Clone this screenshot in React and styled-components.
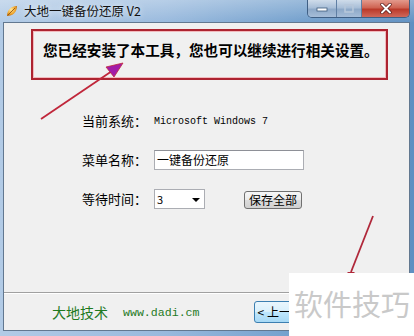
import React from "react";
import styled, { createGlobalStyle } from "styled-components";

const Global = createGlobalStyle`
  html, body { margin: 0; padding: 0; background: #ffffff; }
  body { font-family: "Noto Sans CJK SC", "Noto Sans", sans-serif; }
`;

const Window = styled.div`
  position: relative;
  width: 414px;
  height: 336px;
  display: flex;
  flex-direction: column;
  background: linear-gradient(to right, #b2cbe6 0%, #98b9dd 40%, #6f9dcb 75%, #5f90c2 100%);
  overflow: hidden;
`;

const TitleBar = styled.div`
  height: 22px;
  display: flex;
  align-items: flex-start;
  padding-left: 5px;
  background: linear-gradient(to bottom, rgba(255,255,255,0.3), rgba(255,255,255,0.02));
`;

const AppIcon = styled.svg`
  width: 14px;
  height: 14px;
  margin-top: 4px;
  flex: none;
`;

const Title = styled.div`
  margin-left: 5px;
  margin-top: 2px;
  font-size: 12.5px;
  line-height: 18px;
  color: #111;
  text-shadow: 0 0 6px rgba(255,255,255,0.9);
  white-space: nowrap;
  flex: 1;
`;

const Caption = styled.div`
  display: flex;
  margin-right: 4px;
  height: 17px;
  border: 1px solid #3f5f84;
  border-top: none;
  border-radius: 0 0 5px 5px;
  overflow: hidden;
`;

const CapBtn = styled.div`
  width: ${p => p.$w}px;
  height: 17px;
  display: flex;
  align-items: center;
  justify-content: center;
  border-left: ${p => (p.$first ? "none" : "1px solid #5f7fa4")};
  background: ${p =>
    p.$close
      ? "linear-gradient(to bottom, #e39a8c 0%, #cf6453 45%, #bb3a2a 55%, #d0685a 100%)"
      : "linear-gradient(to bottom, #cfdcea 0%, #a9bfd8 45%, #8ea9c8 55%, #a6bdd8 100%)"};
`;

const Client = styled.div`
  flex: 1;
  margin: 0 4px 5px 3px;
  border: 1px solid #627890;
  background: #f0f0f0;
  display: flex;
  flex-direction: column;
`;

const Banner = styled.div`
  margin: 6px 21px 0 27px;
  border: 2px solid #ad2330;
  box-shadow: inset 0 0 0 1px #f2b9bd;
  padding: 8px 0 0 10px;
  height: 39px;
`;

const BannerText = styled.div`
  font-size: 14.6px;
  font-weight: 700;
  line-height: 22px;
  color: #000;
  white-space: nowrap;
`;

const Form = styled.div`
  margin: 31px 0 0 78px;
  display: grid;
  grid-template-columns: 72px 90px 58px;
  grid-auto-rows: 20px;
  row-gap: 19px;
  align-items: center;
`;

const Label = styled.div`
  font-size: 13px;
  line-height: 20px;
  color: #000;
  white-space: nowrap;
`;

const Mono = styled.div`
  grid-column: span 2;
  font-family: "Liberation Mono", "DejaVu Sans Mono", monospace;
  font-size: 10px;
  color: #000;
  white-space: nowrap;
`;

const TextBox = styled.div`
  grid-column: span 2;
  width: 146px;
  height: 18px;
  border: 1px solid #abadb3;
  border-top-color: #8e9097;
  background: #fff;
  font-size: 12px;
  line-height: 18px;
  padding-left: 2px;
  white-space: nowrap;
`;

const Select = styled.div`
  width: 43px;
  height: 18px;
  border: 1px solid #abadb3;
  background: #fff;
  display: flex;
  align-items: center;
  justify-content: space-between;
  padding: 0 4px 0 2px;
  font-size: 11px;
  line-height: 18px;
`;

const Caret = styled.span`
  width: 0;
  height: 0;
  border-left: 4px solid transparent;
  border-right: 4px solid transparent;
  border-top: 4px solid #000;
  margin-top: 2px;
`;

const Button = styled.div`
  box-sizing: border-box;
  width: ${p => p.$w}px;
  height: ${p => p.$h}px;
  border: 1px solid #707070;
  border-radius: 3px;
  background: linear-gradient(to bottom, #f6f6f6 0%, #ebebeb 48%, #dcdcdc 52%, #d0d0d0 100%);
  font-size: 12px;
  line-height: ${p => p.$h - 2}px;
  text-align: center;
  color: #000;
  white-space: nowrap;
  margin-top: ${p => p.$mt || 0}px;
`;

const Spacer = styled.div`
  flex: 1;
`;

const Separator = styled.div`
  height: 1px;
  background: #a0a0a0;
  border-bottom: 1px solid #ffffff;
`;

const Footer = styled.div`
  height: 36px;
  display: flex;
  align-items: center;
  padding-left: 48px;
`;

const Brand = styled.span`
  font-size: 14px;
  color: #1f7a1f;
  white-space: nowrap;
`;

const Site = styled.span`
  margin-left: 15px;
  font-family: "Liberation Mono", "DejaVu Sans Mono", monospace;
  font-size: 11.6px;
  color: #1f7a1f;
  white-space: nowrap;
`;

const BackButton = styled(Button)`
  margin-left: 54px;
  text-align: left;
  padding-left: 3px;
  border-color: #3c7fb1;
  background: linear-gradient(to bottom, #eaf6fd 0%, #d9f0fc 48%, #bee6fd 52%, #a7d9f5 100%);
`;

const Overlay = styled.svg`
  position: absolute;
  left: 0;
  top: 0;
  width: 414px;
  height: 336px;
  pointer-events: none;
`;

const Watermark = styled.div`
  position: absolute;
  left: 289px;
  top: 273px;
  width: 125px;
  height: 63px;
  background: #ffffff;
  display: flex;
  align-items: center;
  padding: 0 0 4px 5px;
  box-sizing: border-box;
  font-size: 29px;
  color: #c9c9c9;
  white-space: nowrap;
`;

export default function App() {
  return (
    <>
      <Global />
      <Window>
        <TitleBar>
          <AppIcon viewBox="0 0 14 14">
            <defs>
              <radialGradient id="ig" cx="0.4" cy="0.35" r="0.7">
                <stop offset="0" stopColor="#ffe9a0" />
                <stop offset="0.6" stopColor="#f0a830" />
                <stop offset="1" stopColor="#b86a10" />
              </radialGradient>
            </defs>
            <path d="M2 12 C2 6 6 2 12 2 C12 8 8 12 2 12 Z" fill="url(#ig)" />
            <path d="M3 11 L10 4" stroke="#8a4a08" strokeWidth="0.8" />
          </AppIcon>
          <Title>大地一键备份还原 V2</Title>
          <Caption>
            <CapBtn $w={28} $first>
              <svg width="12" height="6" viewBox="0 0 12 6">
                <rect x="1" y="2" width="10" height="3" fill="#fff" stroke="#3d5a7a" strokeWidth="0.8" />
              </svg>
            </CapBtn>
            <CapBtn $w={24}>
              <svg width="10" height="9" viewBox="0 0 10 9">
                <rect x="1" y="1" width="8" height="7" fill="none" stroke="#b8c8da" strokeWidth="1.5" />
              </svg>
            </CapBtn>
            <CapBtn $w={47} $close>
              <svg width="12" height="11" viewBox="0 0 12 11">
                <path d="M2 1.5 L10 9.5 M10 1.5 L2 9.5" stroke="#4a1010" strokeWidth="3.2" strokeLinecap="round" />
                <path d="M2 1.5 L10 9.5 M10 1.5 L2 9.5" stroke="#ffffff" strokeWidth="2" strokeLinecap="round" />
              </svg>
            </CapBtn>
          </Caption>
        </TitleBar>
        <Client>
          <Banner>
            <BannerText>您已经安装了本工具，您也可以继续进行相关设置。</BannerText>
          </Banner>
          <Form>
            <Label>当前系统：</Label>
            <Mono>Microsoft Windows 7</Mono>
            <Label>菜单名称：</Label>
            <TextBox>一键备份还原</TextBox>
            <Label>等待时间：</Label>
            <Select>
              <span>3</span>
              <Caret />
            </Select>
            <Button $w={58} $h={18} $mt={2}>保存全部</Button>
          </Form>
          <Spacer />
          <Separator />
          <Footer>
            <Brand>大地技术</Brand>
            <Site>www.dadi.cm</Site>
            <BackButton $w={76} $h={22}>&lt; 上一步</BackButton>
          </Footer>
        </Client>
        <Overlay viewBox="0 0 414 336">
          <line x1="41" y1="119" x2="112" y2="71" stroke="#c0263a" strokeWidth="1.8" />
          <polygon points="123,63 106,67 114,77" fill="#a21ca8" stroke="#c0263a" strokeWidth="0.8" />
          <line x1="373" y1="216" x2="351" y2="272" stroke="#b0283a" strokeWidth="1.8" />
          <polygon points="347,272 355,272 351,276" fill="#b0283a" />
        </Overlay>
        <Watermark>软件技巧</Watermark>
      </Window>
    </>
  );
}
